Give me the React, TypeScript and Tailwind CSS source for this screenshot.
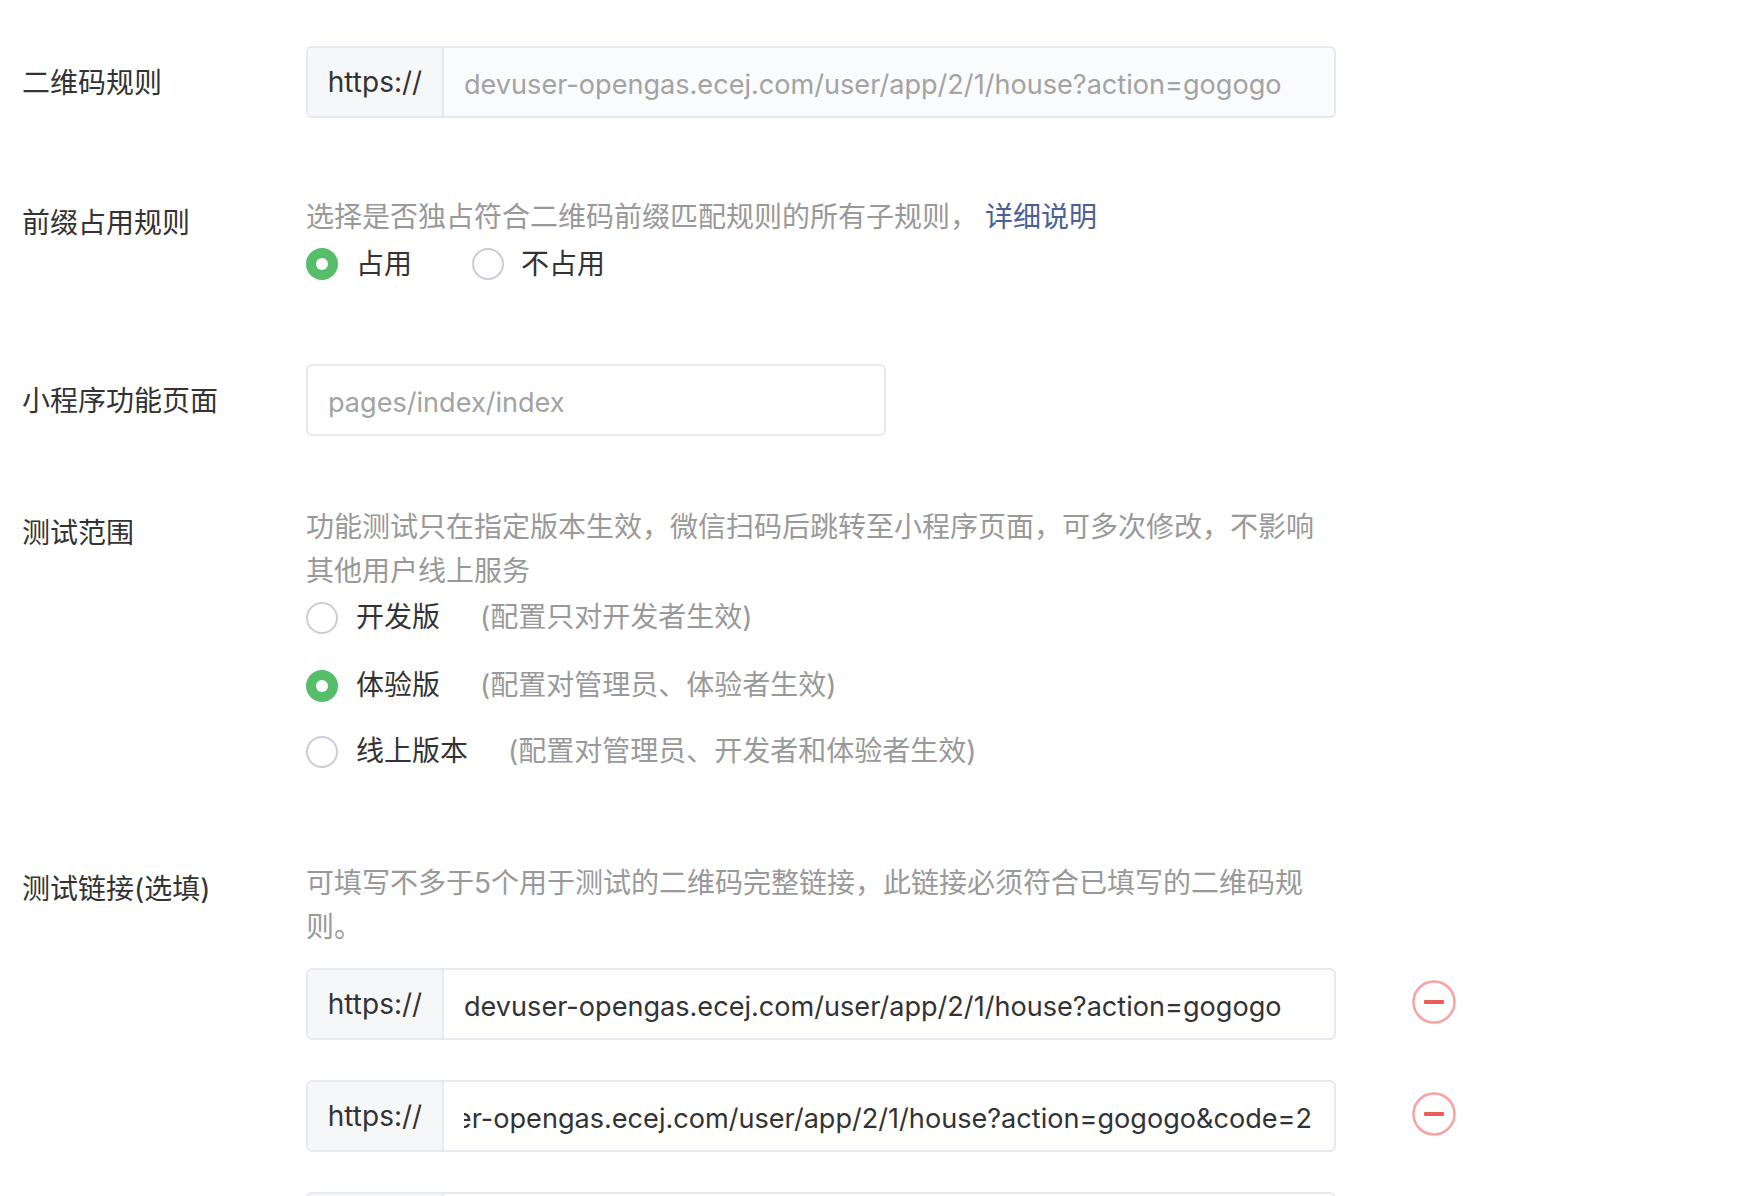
function Radio({ on, className = '' }: { on?: boolean; className?: string }) {
    if (on) {
        return (
            <span className={`flex h-[32px] w-[32px] shrink-0 items-center justify-center rounded-full bg-[#56bd6b] ${className}`}>
                <span className="h-[12px] w-[12px] rounded-full bg-white" />
            </span>
        );
    }
    return <span className={`h-[32px] w-[32px] shrink-0 rounded-full border-2 border-[#c9cdd6] bg-white ${className}`} />;
}

function RemoveIcon() {
    return (
        <svg width="44" height="44" viewBox="0 0 44 44" className="mb-[5px] shrink-0">
            <circle cx="22" cy="22" r="20.5" fill="none" stroke="#f5a3a3" strokeWidth="2.5" />
            <rect x="12" y="20" width="20" height="4" rx="1" fill="#ef5b5b" />
        </svg>
    );
}

function UrlInput({ value, disabled, end }: { value?: string; disabled?: boolean; end?: boolean }) {
    return (
        <div className={`flex h-[72px] w-[1030px] shrink-0 overflow-hidden rounded-[6px] border-2 border-[#e6e9ed] ${disabled ? 'bg-[#fafbfc]' : 'bg-white'}`}>
            <div className="flex w-[136px] shrink-0 items-center justify-center border-r-2 border-[#e6e9ed] bg-[#f6f7f9] text-[#333]">https://</div>
            <div className={`min-w-0 flex-1 pt-[5px] pl-[20px] ${end ? 'pr-[22px]' : 'pr-[20px]'}`}>
                <div className={`flex h-full items-center overflow-hidden text-[27.1px] whitespace-nowrap ${end ? 'justify-end' : ''} ${disabled ? 'text-[#a3a3a3]' : 'text-[#333]'}`}>
                    {value}
                </div>
            </div>
        </div>
    );
}

function Row({ label, top, pad, children }: { label: string; top: string; pad: string; children: React.ReactNode }) {
    return (
        <div className={`flex ${top}`}>
            <div className={`w-[306px] shrink-0 pl-[22px] text-[#333] ${pad}`}>{label}</div>
            <div className="min-w-0 flex-1">{children}</div>
        </div>
    );
}

function RangeOption({ on, name, note, className }: { on?: boolean; name: string; note: string; className: string }) {
    return (
        <div className={`flex items-center ${className}`}>
            <Radio on={on} className="mt-[2px]" />
            <span className="ml-[18px] text-[#333]">{name}</span>
            <span className="ml-[40px] text-[#999]">{note}</span>
        </div>
    );
}

const URL = 'devuser-opengas.ecej.com/user/app/2/1/house?action=gogogo';

export default function App() {
    return (
        <div className="h-[1196px] overflow-hidden bg-white text-[28px] leading-[44px] font-['Inter','Noto_Sans_CJK_SC',sans-serif]">
            <Row label="二维码规则" top="mt-[46px]" pad="pt-[15px]">
                <UrlInput value={URL} disabled />
            </Row>

            <Row label="前缀占用规则" top="mt-[76px]" pad="pt-[7px]">
                <div className="pt-[1px] text-[#999]">
                    选择是否独占符合二维码前缀匹配规则的所有子规则，
                    <span className="ml-[7px] text-[#4a6194]">详细说明</span>
                </div>
                <div className="mt-[3px] flex h-[44px] items-center">
                    <Radio on />
                    <span className="ml-[18px] text-[#333]">占用</span>
                    <span className="ml-[60px] flex items-center">
                        <Radio />
                        <span className="ml-[17px] text-[#333]">不占用</span>
                    </span>
                </div>
            </Row>

            <Row label="小程序功能页面" top="mt-[78px]" pad="pt-[15px]">
                <div className="flex h-[72px] w-[580px] items-center rounded-[6px] border-2 border-[#e6e9ed] px-[20px] pt-[6px] text-[27.1px] text-[#a3a3a3]">
                    pages/index/index
                </div>
            </Row>

            <Row label="测试范围" top="mt-[68px]" pad="pt-[7px]">
                <div className="w-[1030px] pt-[1px] text-[#999]">功能测试只在指定版本生效，微信扫码后跳转至小程序页面，可多次修改，不影响其他用户线上服务</div>
                <RangeOption name="开发版" note="(配置只对开发者生效)" className="mt-[2px]" />
                <RangeOption on name="体验版" note="(配置对管理员、体验者生效)" className="mt-[24px]" />
                <RangeOption name="线上版本" note="(配置对管理员、开发者和体验者生效)" className="mt-[22px]" />
            </Row>

            <Row label="测试链接(选填)" top="mt-[87px]" pad="pt-[7px]">
                <div className="w-[1030px] pt-[1px] text-[#999]">可填写不多于5个用于测试的二维码完整链接，此链接必须符合已填写的二维码规则。</div>
                <div className="mt-[19px] flex flex-col gap-[40px]">
                    <div className="flex items-center gap-[76px]">
                        <UrlInput value={URL} />
                        <RemoveIcon />
                    </div>
                    <div className="flex items-center gap-[76px]">
                        <UrlInput value={URL + '&code=2'} end />
                        <RemoveIcon />
                    </div>
                    <UrlInput />
                </div>
            </Row>
        </div>
    );
}
